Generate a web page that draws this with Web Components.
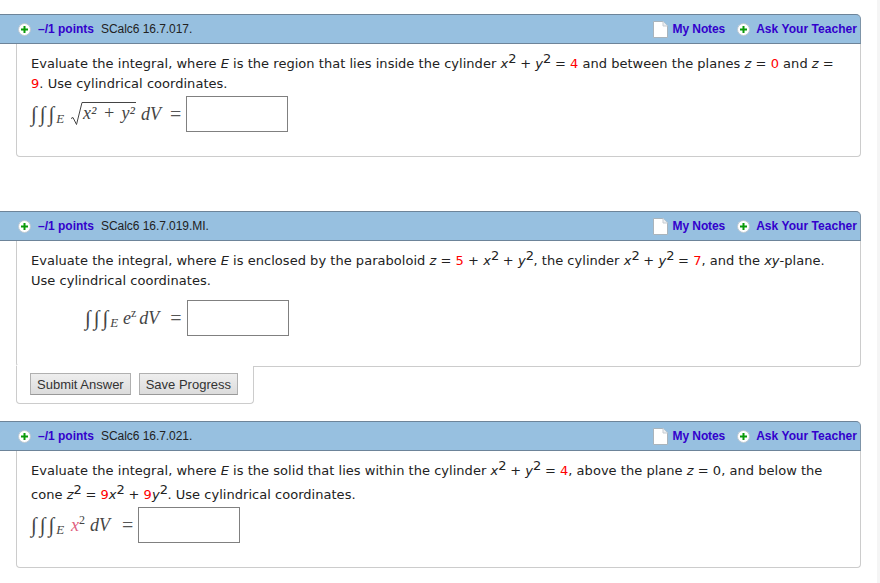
<!DOCTYPE html>
<html>
<head>
<meta charset="utf-8">
<title>SCalc6</title>
<style>
  html, body { margin: 0; padding: 0; background: #fff; }
  body { width: 880px; height: 583px; overflow: hidden; position: relative; }
  .strip { position: absolute; top: 0; right: 0; bottom: 0; width: 3px; background: #f5f5f5; }
  .page { padding-top: 14px; width: 861px; display: flex; flex-direction: column; }
  .r { color: #f00; }
  sup { font-size: 13px; line-height: 0; vertical-align: 5px; letter-spacing: -.5px; }
  sup.m { font-size: 12px; vertical-align: 7px; letter-spacing: 0; font-style: normal; }
  .eq { font-style: normal; font-size: 20px; color: #555; margin: 0 5px 0 10px; }
</style>
</head>
<body>
<template id="plus-tpl">
  <style>
    :host { display: inline-flex; width: 13px; height: 13px; flex: none; }
    svg { display: block; }
  </style>
  <svg width="13" height="13" viewBox="0 0 13 13">
    <circle cx="6.500" cy="6.500" r="6" fill="#fff" stroke="#bcc8d2" stroke-width="1"/>
    <path d="M6.500 3v7M3 6.500h7" stroke="#0a9a0a" stroke-width="2"/>
  </svg>
</template>
<template id="note-tpl">
  <style>
    :host { display: inline-flex; width: 15px; height: 17px; flex: none; }
    svg { display: block; }
  </style>
  <svg width="15" height="17" viewBox="0 0 15 17">
    <path d="M.5.5h9.500l4.500 4.500v11.500h-14z" fill="#fff" stroke="#a9b4bc"/>
    <path d="M10 .5v4.500h4.500" fill="#eef0f2" stroke="#c6ccd2"/>
  </svg>
</template>
<template id="head-tpl">
  <style>
    :host {
      display: flex; align-items: center; box-sizing: border-box; height: 30px;
      background: #97c0e0; border-top: 1px solid #6d8499; border-bottom: 1px solid #6d8499; border-right: 1px solid #7d94a8;
      border-radius: 0 5px 0 0; padding: 0 3px 0 18px;
      font: 12px "Liberation Sans", Arial, sans-serif; color: #222;
    }
    b { font-weight: bold; color: #3300cc; white-space: nowrap; }
    .pts { margin-left: 7px; }
    .code { margin-left: 7px; letter-spacing: -.05px; }
    .right { margin-left: auto; display: flex; align-items: center; }
    .notes { margin-left: 5px; letter-spacing: -.1px; }
    .ask { margin-left: 6px; letter-spacing: .05px; }
    .plus2 { margin-left: 12px; }
    .note { margin-top: 1px; }
  </style>
  <q-plus></q-plus>
  <b class="pts">–/1 points</b>
  <span class="code"><slot></slot></span>
  <span class="right">
    <q-note class="note"></q-note>
    <b class="notes">My Notes</b>
    <q-plus class="plus2"></q-plus>
    <b class="ask">Ask Your Teacher</b>
  </span>
</template>
<template id="body-tpl">
  <style>
    :host {
      display: block; box-sizing: border-box; margin-left: 16px;
      border: 1px solid #ccc; border-top: 0; border-radius: 0 0 4px 4px;
      padding: 10px 15px 0 14px;
      font: 13px/20px "DejaVu Sans", Verdana, sans-serif; color: #222; letter-spacing: .03px;
    }
  </style>
  <slot></slot>
</template>
<template id="math-tpl">
  <style>
    :host { display: flex; align-items: flex-start; }
    .f { display: flex; align-items: center; font: italic 18px "Liberation Serif", serif; color: #444; white-space: nowrap; height: 36px; letter-spacing: 0; }
    .box { box-sizing: border-box; width: 102px; height: 36px; border: 1px solid #808080; background: #fff; flex: none; }
  </style>
  <span class="f"><slot></slot></span>
  <span class="box"></span>
</template>
<template id="int-tpl">
  <style>
    :host { display: inline-flex; align-items: center; width: 33px; height: 24px; font: italic 21px "Liberation Serif", serif; color: #444; letter-spacing: 3px; }
    span { font: italic 13px "Liberation Serif", serif; letter-spacing: 0; margin: 10px 0 0 -1px; }
  </style>
  ∫∫∫<span>E</span>
</template>
<template id="root-tpl">
  <style>
    :host { display: inline-flex; align-items: flex-start; height: 24px; }
    svg { display: block; flex: none; }
    span { display: block; border-top: 1px solid #444; line-height: 20px; padding: 0 1px; margin-left: -1px; word-spacing: 2px; }
  </style>
  <svg width="13" height="24" viewBox="0 0 13 24"><path d="M1 16.500l2-1 3.500 7L12 .5h1" fill="none" stroke="#444"/></svg>
  <span><slot></slot></span>
</template>
<template id="btn-tpl">
  <style>
    :host {
      display: inline-flex; align-items: center; justify-content: center; box-sizing: border-box; height: 22px;
      background: linear-gradient(#eeeeee, #dcdcdc); border: 1px solid #b0b0b0; border-bottom-color: #999;
      font: 13px "Liberation Sans", Arial, sans-serif; color: #333; padding: 0 6px;
    }
  </style>
  <slot></slot>
</template>
<template id="tab-tpl">
  <style>
    :host {
      display: flex; gap: 8px; box-sizing: border-box; width: 238px; height: 38px; margin-left: 16px;
      margin-top: -1px; background: #fff; position: relative;
      border: 1px solid #ccc; border-top: 0; border-radius: 0 0 4px 4px; padding: 7px 0 0 13px;
    }
    :host::before { content: ""; position: absolute; left: 0; right: 0; top: -1px; height: 1px; background: #fff; }
  </style>
  <slot></slot>
</template>

<div class="strip"></div>
<div class="page">
  <q-head>SCalc6 16.7.017.</q-head>
  <q-body style="height:113px">
    <div>Evaluate the integral, where <i>E</i> is the region that lies inside the cylinder <i>x</i><sup>2</sup> + <i>y</i><sup>2</sup> = <span class="r">4</span> and between the planes <i>z</i> = <span class="r">0</span> and <i>z</i> =<br><span class="r">9</span>. Use cylindrical coordinates.</div>
    <q-math style="margin-top:2px"><q-int></q-int><q-root style="margin-left:6px">x² + y²</q-root><span style="margin-left:5px">dV</span><span class="eq" style="margin-left:9px">=</span></q-math>
  </q-body>

  <q-head style="margin-top:54px">SCalc6 16.7.019.MI.</q-head>
  <q-body style="height:126px">
    <div>Evaluate the integral, where <i>E</i> is enclosed by the paraboloid <i>z</i> = <span class="r">5</span> + <i>x</i><sup>2</sup> + <i>y</i><sup>2</sup>, the cylinder <i>x</i><sup>2</sup> + <i>y</i><sup>2</sup> = <span class="r">7</span>, and the <i>xy</i>-plane.<br>Use cylindrical coordinates.</div>
    <q-math style="margin:9px 0 0 54px"><q-int></q-int><span style="margin-left:5px">e<sup class="m">z</sup></span><span style="margin-left:3px">dV</span><span class="eq" style="margin-left:11px">=</span></q-math>
  </q-body>
  <q-tab><q-btn>Submit Answer</q-btn><q-btn>Save Progress</q-btn></q-tab>

  <q-head style="margin-top:17px">SCalc6 16.7.021.</q-head>
  <q-body style="height:117px">
    <div>Evaluate the integral, where <i>E</i> is the solid that lies within the cylinder <i>x</i><sup>2</sup> + <i>y</i><sup>2</sup> = <span class="r">4</span>, above the plane <i>z</i> = 0, and below the</div>
    <div style="margin-top:4px">cone <i>z</i><sup>2</sup> = <span class="r">9</span><i>x</i><sup>2</sup> + <span class="r">9</span><i>y</i><sup>2</sup>. Use cylindrical coordinates.</div>
    <q-math style="margin-top:2px"><q-int></q-int><span style="margin-left:7px"><span style="color:#e06080">x</span><sup class="m">2</sup></span><span style="margin-left:5px">dV</span><span class="eq" style="margin-left:12px">=</span></q-math>
  </q-body>
</div>

<script>
  class TemplatedElement extends HTMLElement {
    constructor(id) {
      super();
      const shadow = this.attachShadow({ mode: 'open' });
      shadow.appendChild(document.getElementById(id).content.cloneNode(true));
    }
  }

  const tags = {
    'q-plus': 'plus-tpl',
    'q-note': 'note-tpl',
    'q-head': 'head-tpl',
    'q-body': 'body-tpl',
    'q-math': 'math-tpl',
    'q-int': 'int-tpl',
    'q-root': 'root-tpl',
    'q-btn': 'btn-tpl',
    'q-tab': 'tab-tpl'
  };

  Object.keys(tags).forEach((tag) => {
    customElements.define(tag, class extends TemplatedElement {
      constructor() { super(tags[tag]); }
    });
  });
</script>
</body>
</html>
